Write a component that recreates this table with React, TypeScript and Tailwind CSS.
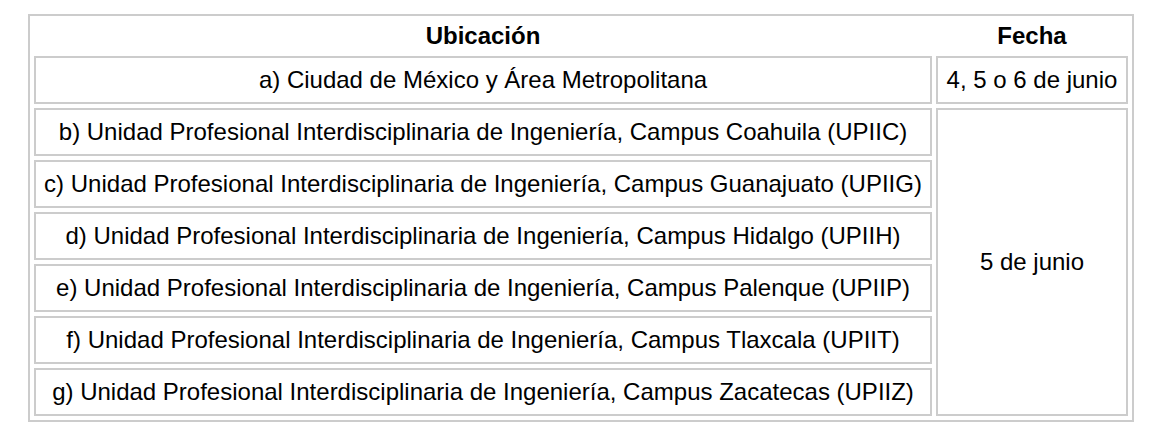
const rows = [
  'b) Unidad Profesional Interdisciplinaria de Ingeniería, Campus Coahuila (UPIIC)',
  'c) Unidad Profesional Interdisciplinaria de Ingeniería, Campus Guanajuato (UPIIG)',
  'd) Unidad Profesional Interdisciplinaria de Ingeniería, Campus Hidalgo (UPIIH)',
  'e) Unidad Profesional Interdisciplinaria de Ingeniería, Campus Palenque (UPIIP)',
  'f) Unidad Profesional Interdisciplinaria de Ingeniería, Campus Tlaxcala (UPIIT)',
  'g) Unidad Profesional Interdisciplinaria de Ingeniería, Campus Zacatecas (UPIIZ)',
];

const cell = 'border-2 border-[#cccccc] h-[48px] p-0 text-center align-middle leading-[28px]';

export default function App() {
  return (
    <div className="w-[1160px] h-[440px] bg-white pt-[14px] pl-[28px] font-['Liberation_Sans',Arial,sans-serif] text-[24px] text-black">
      <table className="table-fixed border-separate border-spacing-[4px] border-2 border-[#cccccc] w-[1106px]">
        <colgroup>
          <col className="w-[898px]" />
          <col className="w-[192px]" />
        </colgroup>
        <thead>
          <tr>
            <th className="h-[32px] p-0 font-bold text-center align-middle leading-[28px]">Ubicación</th>
            <th className="h-[32px] p-0 font-bold text-center align-middle leading-[28px]">Fecha</th>
          </tr>
        </thead>
        <tbody>
          <tr>
            <td className={cell}>a) Ciudad de México y Área Metropolitana</td>
            <td className={cell}>4, 5 o 6 de junio</td>
          </tr>
          {rows.map((r, i) => (
            <tr key={r}>
              <td className={cell}>{r}</td>
              {i === 0 && (
                <td rowSpan={6} className="border-2 border-[#cccccc] p-0 text-center align-middle leading-[28px]">
                  5 de junio
                </td>
              )}
            </tr>
          ))}
        </tbody>
      </table>
    </div>
  );
}
